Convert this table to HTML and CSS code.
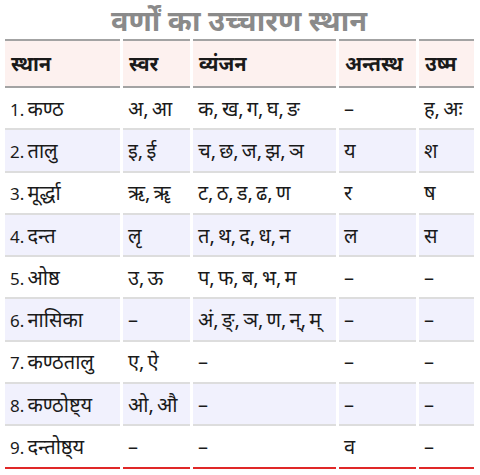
FILE: index.html
```html
<!DOCTYPE html>
<html lang="hi">
<head>
<meta charset="utf-8">
<link rel="stylesheet" href="styles.css">
</head>
<body>
<div class="page">
  <div class="title">वर्णों का उच्चारण स्थान</div>
  <table class="grid">
    <colgroup>
      <col class="c1"><col class="c2"><col class="c3"><col class="c4"><col class="c5">
    </colgroup>
    <thead>
      <tr><th>स्थान</th><th>स्वर</th><th>व्यंजन</th><th>अन्तस्थ</th><th>उष्म</th></tr>
    </thead>
    <tbody>
      <tr><td><span class="num">1.</span> कण्ठ</td><td>अ, आ</td><td>क, ख, ग, घ, ङ</td><td>–</td><td>ह, अः</td></tr>
      <tr class="alt"><td><span class="num">2.</span> तालु</td><td>इ, ई</td><td>च, छ, ज, झ, ञ</td><td>य</td><td>श</td></tr>
      <tr><td><span class="num">3.</span> मूर्द्धा</td><td>ऋ, ॠ</td><td>ट, ठ, ड, ढ, ण</td><td>र</td><td>ष</td></tr>
      <tr class="alt"><td><span class="num">4.</span> दन्त</td><td>लृ</td><td>त, थ, द, ध, न</td><td>ल</td><td>स</td></tr>
      <tr><td><span class="num">5.</span> ओष्ठ</td><td>उ, ऊ</td><td>प, फ, ब, भ, म</td><td>–</td><td>–</td></tr>
      <tr class="alt"><td><span class="num">6.</span> नासिका</td><td>–</td><td>अं, ङ्, ञ, ण, न्, म्</td><td>–</td><td>–</td></tr>
      <tr><td><span class="num">7.</span> कण्ठतालु</td><td>ए, ऐ</td><td>–</td><td>–</td><td>–</td></tr>
      <tr class="alt"><td><span class="num">8.</span> कण्ठोष्ट्य</td><td>ओ, औ</td><td>–</td><td>–</td><td>–</td></tr>
      <tr class="last"><td><span class="num">9.</span> दन्तोष्ठ्य</td><td>–</td><td>–</td><td>व</td><td>–</td></tr>
    </tbody>
  </table>
</div>
</body>
</html>
```
FILE: styles.css
```css
html, body {
  margin: 0;
  padding: 0;
  background: #ffffff;
}
body {
  font-family: "Noto Sans", "Noto Sans Devanagari", sans-serif;
  color: #1a1a1a;
}
.page {
  padding: 0 4px 0 2px;
}
.title {
  text-align: center;
  font-size: 29px;
  font-weight: 700;
  color: #8a8a8a;
  line-height: 39px;
  height: 39px;
}
.grid {
  width: 474px;
  table-layout: fixed;
  border-collapse: separate;
  border-spacing: 3px 0;
  font-size: 20px;
}
.num {
  font-size: 17px;
}
.c1 { width: 115px; }
.c2 { width: 67px; }
.c3 { width: 143px; }
.c4 { width: 77px; }
.c5 { width: 55px; }
.grid th {
  text-align: left;
  font-weight: 700;
  background: #fdf1ef;
  border-top: 2px solid #a3a3a3;
  border-bottom: 2px solid #a3a3a3;
  height: 49px;
  padding: 0 6px;
  box-sizing: border-box;
}
.grid td {
  height: 42.3px;
  padding: 0 5px;
  box-sizing: border-box;
  border-bottom: 2px solid #dddddd;
  white-space: nowrap;
  word-spacing: -2px;
}
.grid tr.alt td {
  background: #f1f1fd;
}
.grid tr.last td {
  border-bottom: 2px solid #e02828;
}
```
